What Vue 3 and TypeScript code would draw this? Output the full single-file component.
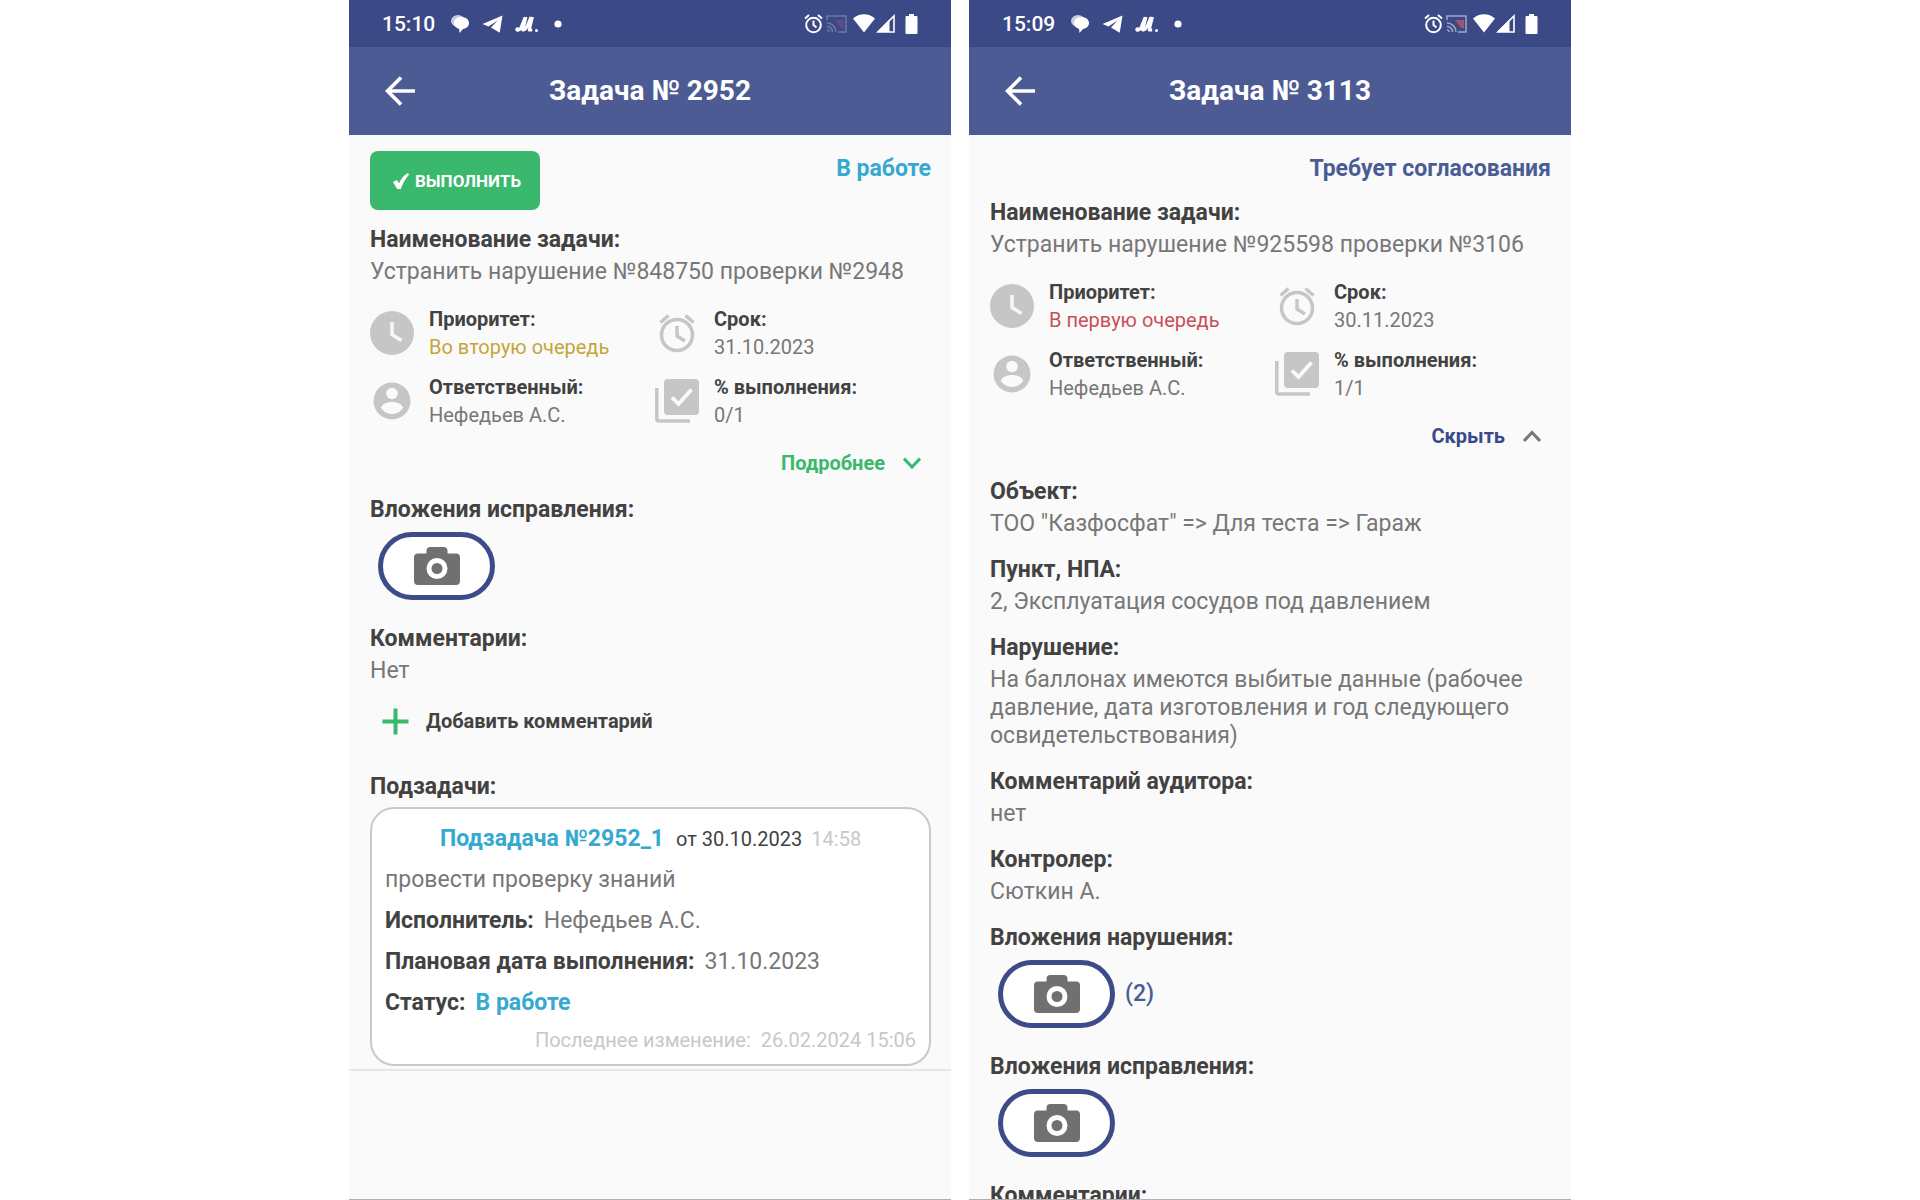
<script setup lang="ts">
interface Task {
  id: number
  time: string
  castActive: boolean
  status: string
  statusTone: 'cyan' | 'indigo'
  canComplete: boolean
  title: string
  priority: string
  priorityTone: 'amber' | 'red'
  due: string
  assignee: string
  progress: string
  expanded: boolean
}

interface Field {
  label: string
  value: string
}

const tasks: Task[] = [
  {
    id: 2952,
    time: '15:10',
    castActive: false,
    status: 'В работе',
    statusTone: 'cyan',
    canComplete: true,
    title: 'Устранить нарушение №848750 проверки №2948',
    priority: 'Во вторую очередь',
    priorityTone: 'amber',
    due: '31.10.2023',
    assignee: 'Нефедьев А.С.',
    progress: '0/1',
    expanded: false,
  },
  {
    id: 3113,
    time: '15:09',
    castActive: true,
    status: 'Требует согласования',
    statusTone: 'indigo',
    canComplete: false,
    title: 'Устранить нарушение №925598 проверки №3106',
    priority: 'В первую очередь',
    priorityTone: 'red',
    due: '30.11.2023',
    assignee: 'Нефедьев А.С.',
    progress: '1/1',
    expanded: true,
  },
]

const details: Field[] = [
  { label: 'Объект:', value: 'ТОО "Казфосфат" => Для теста => Гараж' },
  { label: 'Пункт, НПА:', value: '2, Эксплуатация сосудов под давлением' },
  {
    label: 'Нарушение:',
    value: 'На баллонах имеются выбитые данные (рабочее давление, дата изготовления и год следующего освидетельствования)',
  },
  { label: 'Комментарий аудитора:', value: 'нет' },
  { label: 'Контролер:', value: 'Сюткин А.' },
]
</script>

<template>
  <main class="stage">
    <section v-for="task in tasks" :key="task.id" class="phone">
      <div class="statusbar">
        <span class="clock">{{ task.time }}</span>
        <svg class="chat" width="20" height="20" viewBox="0 0 20 20" aria-hidden="true">
          <ellipse cx="8" cy="7" rx="7" ry="6" fill="#c9cde0" />
          <path d="M11 3c5 0 8 2.600 8 6 0 3.200-2.600 5.400-6 5.900L9.500 19l-.4-4.100C6 14 4 11.900 4 9c0-3.400 3-6 7-6z" fill="#fff" />
        </svg>
        <svg class="plane" width="21" height="18" viewBox="0 0 21 18" aria-hidden="true">
          <path d="M20.500 0.500 0.500 9l6 2.500L15.500 5.500 9 12.500l8.700 5.300z" fill="#fff" />
        </svg>
        <svg class="market" width="24" height="18" viewBox="0 0 24 18" aria-hidden="true">
          <path d="M2.500 15c3 0 3.500-2 4.500-5l3-7.500M11 2 7.800 15c3 .5 4.200-3 5.200-6l3-7M17.500 2l-3.300 13h3" fill="none" stroke="#fff" stroke-width="3" stroke-linejoin="round" />
          <circle cx="2.500" cy="14.500" r="2.200" fill="#fff" />
          <circle cx="21.500" cy="15.500" r="1.500" fill="#fff" />
        </svg>
        <svg class="dot" width="8" height="8" viewBox="0 0 8 8" aria-hidden="true">
          <circle cx="4" cy="4" r="3.600" fill="#fff" />
        </svg>
        <div class="system">
          <svg width="19" height="20" viewBox="0 0 19 20" fill="none" stroke="#fff" stroke-width="2" aria-hidden="true">
            <circle cx="9.500" cy="11" r="7.300" />
            <path d="M9.500 6.500V11l3 2.500M1 4.500 5 1M18 4.500 14 1" />
          </svg>
          <svg class="cast" :class="{ active: task.castActive }" width="21" height="18" viewBox="0 0 21 18" aria-hidden="true">
            <path class="screen" d="M9 5h9v8h-3z" />
            <path d="M1 5V1h19v16h-8M1 8a9 9 0 0 1 9 9M1 11.500A5.500 5.500 0 0 1 6.500 17M1 15a2 2 0 0 1 2 2" fill="none" stroke="#b9bfd8" stroke-width="1.500" />
          </svg>
          <svg class="wifi" width="22" height="19" viewBox="0 0 22 19" aria-hidden="true">
            <path d="M0 4.500C6-1.200 16-1.200 22 4.500L11 18.500z" fill="#fff" />
          </svg>
          <svg class="signal" width="19" height="19" viewBox="0 0 19 19" aria-hidden="true">
            <path d="M18 2v16H2z" fill="none" stroke="#fff" stroke-width="1.600" />
            <path d="M13.500 5.500V18H1z" fill="#fff" />
          </svg>
          <svg class="battery" width="13" height="20" viewBox="0 0 13 20" aria-hidden="true">
            <path d="M4 0h5v2h2.500a1 1 0 0 1 1 1v16a1 1 0 0 1-1 1h-10a1 1 0 0 1-1-1V3a1 1 0 0 1 1-1H4z" fill="#fff" />
          </svg>
        </div>
      </div>

      <header class="appbar">
        <button class="back" type="button" aria-label="Назад">
          <svg width="30" height="30" viewBox="0 0 30 30" fill="none" stroke="#fff" stroke-width="3.600" aria-hidden="true">
            <path d="M30 15H2.500M16 1.500 2.500 15 16 28.500" />
          </svg>
        </button>
        <h1>Задача № {{ task.id }}</h1>
      </header>

      <div class="content">
        <div class="top">
          <button v-if="task.canComplete" class="complete" type="button">
            <svg width="16" height="16" viewBox="0 0 16 16" aria-hidden="true">
              <path d="M0 9 3.800 7 6 10.200C8 6 11 2 15 0L16 1.800C12.500 5.500 10 10 7.800 16H4.200z" fill="#fff" />
            </svg>
            ВЫПОЛНИТЬ
          </button>
          <strong class="state" :class="task.statusTone">{{ task.status }}</strong>
        </div>

        <div class="field">
          <h2>Наименование задачи:</h2>
          <p>{{ task.title }}</p>
        </div>

        <dl class="facts">
          <div class="fact">
            <svg width="44" height="44" viewBox="0 0 44 44" aria-hidden="true">
              <circle cx="22" cy="22" r="22" fill="#c6c6c6" />
              <path d="M22 11v12.500l9.500 6" fill="none" stroke="#f7f7f7" stroke-width="3.500" />
            </svg>
            <div>
              <dt>Приоритет:</dt>
              <dd :class="task.priorityTone">{{ task.priority }}</dd>
            </div>
          </div>
          <div class="fact">
            <svg width="44" height="44" viewBox="0 0 44 44" fill="none" stroke="#c6c6c6" stroke-width="3.500" aria-hidden="true">
              <circle cx="22" cy="24" r="15.500" />
              <path d="M22 15v10l8 5M5.500 11.500l8-7M38.500 11.500l-8-7" />
            </svg>
            <div>
              <dt>Срок:</dt>
              <dd>{{ task.due }}</dd>
            </div>
          </div>
          <div class="fact">
            <svg width="44" height="44" viewBox="0 0 44 44" aria-hidden="true">
              <circle cx="22" cy="22" r="18.500" fill="#c6c6c6" />
              <circle cx="22" cy="14.500" r="5.800" fill="#fafafa" />
              <path d="M11 29c0-4 7-6 11-6s11 2 11 6c-2.500 3.800-6.500 6-11 6s-8.500-2.200-11-6z" fill="#fafafa" />
            </svg>
            <div>
              <dt>Ответственный:</dt>
              <dd>{{ task.assignee }}</dd>
            </div>
          </div>
          <div class="fact">
            <svg width="44" height="44" viewBox="0 0 44 44" aria-hidden="true">
              <rect x="9" y="0" width="35" height="36" rx="4" fill="#c6c6c6" />
              <path d="M17 18.500l6.500 6.500L36.500 10.500" fill="none" stroke="#fafafa" stroke-width="3.800" />
              <path d="M1.800 9v31a2 2 0 0 0 2 2H35" fill="none" stroke="#c6c6c6" stroke-width="3.500" />
            </svg>
            <div>
              <dt>% выполнения:</dt>
              <dd>{{ task.progress }}</dd>
            </div>
          </div>
        </dl>

        <button class="toggle" :class="{ open: task.expanded }" type="button" :aria-expanded="task.expanded">
          {{ task.expanded ? 'Скрыть' : 'Подробнее' }}
          <svg width="18" height="12" viewBox="0 0 18 12" fill="none" stroke-width="3" aria-hidden="true">
            <path :d="task.expanded ? 'M1 11 9 2.500 17 11' : 'M1 1.500 9 10 17 1.500'" />
          </svg>
        </button>

        <template v-if="task.expanded">
          <div v-for="item in details" :key="item.label" class="field">
            <h2>{{ item.label }}</h2>
            <p>{{ item.value }}</p>
          </div>
        </template>

        <div v-for="kind in task.expanded ? ['нарушения', 'исправления'] : ['исправления']" :key="kind" class="files">
          <h2>Вложения {{ kind }}:</h2>
          <div class="shots">
            <button class="camera" type="button" :aria-label="`Вложения ${kind}`">
              <svg width="46" height="38" viewBox="0 0 46 38" aria-hidden="true">
                <path d="M4 6.500h8.500V4a4 4 0 0 1 4-4h13a4 4 0 0 1 4 4v2.500H42a4 4 0 0 1 4 4V34a4 4 0 0 1-4 4H4a4 4 0 0 1-4-4V10.500a4 4 0 0 1 4-4z" fill="#707070" />
                <circle cx="23" cy="21.500" r="8" fill="#707070" stroke="#fff" stroke-width="5" />
              </svg>
            </button>
            <span v-if="kind === 'нарушения'" class="count">(2)</span>
          </div>
        </div>

        <div class="field comments">
          <h2>Комментарии:</h2>
          <p v-if="!task.expanded">Нет</p>
        </div>

        <template v-if="!task.expanded">
          <button class="add" type="button">
            <svg width="27" height="27" viewBox="0 0 27 27" aria-hidden="true">
              <path d="M13.500 0.500v26M0.500 13.500h26" stroke="#3ab86e" stroke-width="4" />
            </svg>
            Добавить комментарий
          </button>

          <h2>Подзадачи:</h2>
          <article class="card">
            <div class="headline">
              <a href="#subtask">Подзадача №2952_1</a>
              <span class="date">от 30.10.2023</span>
              <time>14:58</time>
            </div>
            <p>провести проверку знаний</p>
            <p><b>Исполнитель:</b>Нефедьев А.С.</p>
            <p><b>Плановая дата выполнения:</b>31.10.2023</p>
            <p><b>Статус:</b><strong class="cyan">В работе</strong></p>
            <p class="updated"><span>Последнее изменение:</span><span>26.02.2024 15:06</span></p>
          </article>
        </template>
      </div>
      <div v-if="!task.expanded" class="rest"></div>
    </section>
  </main>
</template>

<style>
body {
  margin: 0;
  background: #fff;
}
</style>

<style scoped>
.stage {
  display: flex;
  justify-content: center;
  gap: 18px;
  height: 100vh;
  font-family: Roboto, 'Liberation Sans', sans-serif;
  font-size: 23px;
  line-height: 28px;
  color: #777;
}

.phone {
  box-sizing: border-box;
  display: flex;
  flex-direction: column;
  flex: 0 1 602px;
  min-width: 0;
  overflow: hidden;
  background: #fafafa;
  border-bottom: 1px solid #b0b0b0;
}

.phone > * {
  flex-shrink: 0;
}

button {
  padding: 0;
  border: 0;
  background: none;
  font: inherit;
  color: inherit;
  cursor: pointer;
}

h1,
h2,
p,
dl,
dd {
  margin: 0;
}

svg {
  display: block;
  flex-shrink: 0;
}

.statusbar {
  box-sizing: border-box;
  display: flex;
  align-items: center;
  height: 47px;
  padding: 0 33px;
  background: #3b4987;
  color: #fff;
}

.clock {
  font-size: 21px;
  font-weight: 500;
}

.chat {
  margin-left: 15px;
}

.plane,
.market {
  margin-left: 12px;
}

.dot {
  margin-left: 15px;
}

.system {
  display: flex;
  align-items: center;
  margin-left: auto;
}

.cast {
  margin-left: 3px;
  opacity: 0.4;
}

.cast.active {
  opacity: 0.8;
}

.screen {
  fill: #8f5f76;
}

.active .screen {
  fill: #b5586a;
}

.wifi {
  margin-left: 6px;
}

.signal {
  margin-left: 1px;
}

.battery {
  margin-left: 10px;
}

.appbar {
  display: grid;
  grid-template-columns: 30px 1fr 30px;
  align-items: center;
  height: 88px;
  padding: 0 36px;
  background: #4d5b95;
  color: #fff;
}

h1 {
  grid-column: 2;
  font-size: 28px;
  font-weight: 700;
  line-height: 36px;
  text-align: center;
}

.content {
  display: flex;
  flex-direction: column;
  padding: 16px 20px 3px 21px;
}

.top {
  display: flex;
  align-items: flex-start;
  margin-bottom: 16px;
}

.complete {
  display: flex;
  align-items: center;
  gap: 6px;
  height: 59px;
  padding: 0 19px 0 23px;
  border-radius: 8px;
  background: #3ab86e;
  color: #fff;
  font-size: 17px;
  font-weight: 700;
}

.state {
  margin: 4px 0 0 auto;
}

.cyan {
  color: #35a9cf;
}

.indigo {
  color: #4a5c96;
}

h2 {
  font-size: 23px;
  font-weight: 700;
  line-height: 28px;
  color: #424242;
}

.field {
  margin-bottom: 18px;
}

.field p {
  margin-top: 4px;
}

.facts {
  display: grid;
  grid-template-columns: 285px 1fr;
  row-gap: 12px;
  margin-top: 1px;
  font-size: 20px;
}

.fact {
  display: flex;
  align-items: center;
  gap: 15px;
}

dt {
  font-weight: 700;
  color: #424242;
}

.amber {
  color: #c4a53c;
}

.red {
  color: #c94f57;
}

.toggle {
  display: flex;
  align-items: center;
  align-self: flex-end;
  gap: 18px;
  margin: 20px 10px 19px 0;
  font-size: 20px;
  font-weight: 700;
  color: #3ab86e;
  stroke: #3ab86e;
}

.toggle.open {
  margin-bottom: 28px;
  color: #394a8a;
  stroke: #777;
}

.files {
  margin-bottom: 25px;
}

.shots {
  display: flex;
  align-items: center;
  gap: 10px;
  margin: 8px 0 0 8px;
}

.camera {
  display: flex;
  align-items: center;
  justify-content: center;
  box-sizing: border-box;
  width: 117px;
  height: 68px;
  border: 5px solid #3d4c88;
  border-radius: 34px;
  background: #fff;
}

.count {
  font-weight: 500;
  color: #4a5c96;
}

.comments {
  margin-bottom: 22px;
}

.add {
  display: flex;
  align-items: center;
  align-self: flex-start;
  gap: 17px;
  margin: 0 0 38px 12px;
  font-size: 20px;
  font-weight: 700;
  color: #424242;
}

.card {
  display: flex;
  flex-direction: column;
  gap: 13px;
  margin-top: 6px;
  padding: 16px 13px 14px;
  border: 2px solid #c9c9c9;
  border-radius: 24px;
  background: #fff;
}

.headline {
  display: flex;
  justify-content: center;
  font-size: 20px;
}

.headline a {
  font-size: 23px;
  font-weight: 700;
  color: #35a9cf;
  text-decoration: none;
}

.date {
  margin: 0 9px 0 12px;
  color: #424242;
}

time,
.updated {
  color: #c8c8c8;
}

.card b {
  margin-right: 10px;
  color: #424242;
}

.updated {
  display: flex;
  justify-content: flex-end;
  gap: 10px;
  font-size: 20px;
  line-height: 20px;
}

.rest {
  flex: 1;
  border-top: 2px solid #e6e6e6;
}
</style>
